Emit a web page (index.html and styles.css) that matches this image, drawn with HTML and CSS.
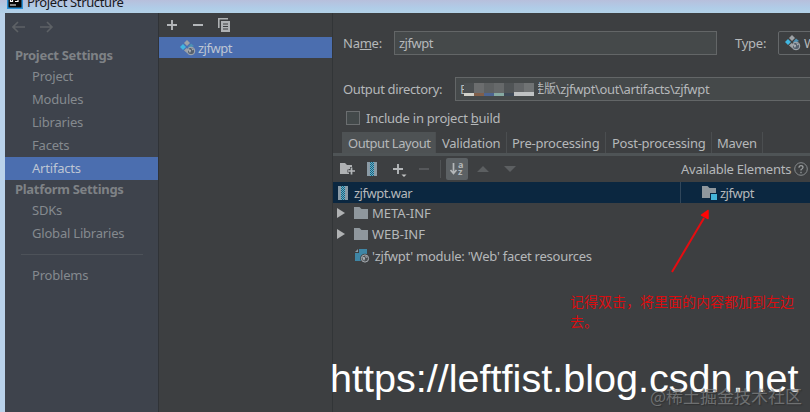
FILE: index.html
```html
<!DOCTYPE html>
<html lang="zh-CN">

<head>
    <meta charset="UTF-8">
    <title>Project Structure</title>
    <link rel="stylesheet" href="styles.css">
</head>

<body>
    <!-- shared icons -->
    <svg class="defs">
        <defs>
            <pattern id="zip" width="2" height="2" patternUnits="userSpaceOnUse">
                <rect width="2" height="2" fill="#2b5b70" />
                <rect width="1" height="1" fill="#55b5d6" />
                <rect x="1" y="1" width="1" height="1" fill="#55b5d6" />
            </pattern>
            <symbol id="artifact" viewBox="0 0 16 16">
                <path d="M7 0l3 3-3 3-3-3z" fill="#9da2a6" />
                <path d="M3 4l3 3-3 3-3-3z" fill="#40b6e0" />
                <path d="M11 3.500l3 2.500-2 1-3 1-1-1z" fill="#4d91b5" />
                <path d="M6.500 8l1.500 2-1 3-3-2.500z" fill="#9da2a6" />
                <circle cx="11" cy="11" r="3.800" fill="#55606d" stroke="#a9aeb3" />
                <path d="M8 9l3 1v1l-1 2-2-3zM11 7.500l3 2-1.500 1z" fill="#a9aeb3" />
            </symbol>
            <symbol id="archive" viewBox="0 0 10 14">
                <path d="M0 0h10v14H0z" fill="#8b9ba6" />
                <path d="M3 0h4v14H3z" fill="url(#zip)" />
            </symbol>
            <symbol id="folder" viewBox="0 0 14 12">
                <path d="M0 0h5.500l2 2H14v10H0z" fill="#8f979d" />
            </symbol>
        </defs>
    </svg>

    <div class="titlebar">
        <svg class="app-icon" width="16" height="12" viewBox="0 0 16 12">
            <path d="M0 0h16v9H0z" fill="#2a91d8" />
            <path d="M1.500 0h13v7.500h-13z" fill="#080808" />
            <path d="M3 5h6M3.500 0v1.500h2V0M8 1.500h3V0" fill="none" stroke="#fff" stroke-width="1.200" />
        </svg>
        <span class="title">Project Structure</span>
    </div>

    <div class="window">
        <nav class="sidebar">
            <svg class="history" width="42" height="12" viewBox="0 0 42 12">
                <path d="M13 6H1M6 1L1 6l5 5M28 6h12M35 1l5 5-5 5" fill="none" stroke="#5d6165" stroke-width="1.600" />
            </svg>
            <h2>Project Settings</h2>
            <a class="item">Project</a>
            <a class="item">Modules</a>
            <a class="item">Libraries</a>
            <a class="item">Facets</a>
            <a class="item selected">Artifacts</a>
            <h2 class="platform">Platform Settings</h2>
            <a class="item">SDKs</a>
            <a class="item">Global Libraries</a>
            <hr>
            <a class="item">Problems</a>
        </nav>

        <div class="list">
            <div class="list-tools">
                <svg width="66" height="14" viewBox="0 0 66 14">
                    <path d="M0 7h10M5 2v10M26 7h10" stroke="#b4b7b9" stroke-width="1.900" />
                    <path d="M51.800 10V.8H61" fill="none" stroke="#aeb1b3" stroke-width="1.600" />
                    <path d="M54 3h9v11h-9z" fill="#aeb1b3" />
                    <path d="M56 6h5M56 8.500h5M56 11h5" stroke="#3c3f41" />
                </svg>
            </div>
            <div class="list-row">
                <svg width="16" height="16"><use href="#artifact" /></svg>
                <span>zjfwpt</span>
            </div>
        </div>

        <main class="editor">
            <div class="field name-field">
                <label>Na<u>m</u>e:</label>
                <div class="input name-input">zjfwpt</div>
                <label class="type-label">Type:</label>
                <div class="select">
                    <svg width="16" height="16"><use href="#artifact" /></svg>
                    <span>Web Application: Exploded</span>
                </div>
            </div>
            <div class="field dir-field">
                <label>Output directory:</label>
                <div class="input dir-input">
                    <span class="cut">E</span>
                    <svg class="mosaic" width="70" height="13" viewBox="0 0 70 13">
                        <path d="M0 0h10v10H0z" fill="#4b4f51" />
                        <path d="M10 0h10v10H10z" fill="#6b6d6e" />
                        <path d="M20 0h10v10H20z" fill="#5e6162" />
                        <path d="M30 0h10v10H30z" fill="#66696a" />
                        <path d="M40 0h10v10H40z" fill="#505456" />
                        <path d="M50 0h20v9H50z" fill="#626567" />
                        <path d="M60 0h10v9H60z" fill="#707374" />
                        <path d="M0 10h10v3H0z" fill="#d0d0c9" />
                        <path d="M10 10h10v3H10z" fill="#815f4a" />
                        <path d="M20 10h10v3H20z" fill="#4d6591" />
                        <path d="M30 10h10v3H30z" fill="#86aaa2" />
                        <path d="M40 10h10v3H40z" fill="#3e4957" />
                        <path d="M50 9h20v4H50z" fill="#bfc2c3" />
                    </svg>
                    <span class="half">佳</span><span class="edition">版</span><span class="path">\zjfwpt\out\artifacts\zjfwpt</span>
                </div>
            </div>
            <div class="field check-field">
                <i class="checkbox"></i>
                <span>Include in project <u>b</u>uild</span>
            </div>

            <div class="tabs">
                <span class="tab t1 active">Output Layout</span>
                <span class="tab t2">Validation</span>
                <span class="tab t3">Pre-processing</span>
                <span class="tab t4">Post-processing</span>
                <span class="tab t5">Maven</span>
            </div>

            <div class="toolbar">
                <svg width="176" height="22" viewBox="0 0 176 22">
                    <path d="M0 5h5l2 2h5v4H9v5H0z" fill="#afb1b3" />
                    <path d="M11.500 9v8M7.500 13h8" stroke="#3c3f41" stroke-width="3" />
                    <path d="M11.500 9.500v7M8 13h7" stroke="#b4b7b9" stroke-width="1.700" />
                    <use href="#archive" x="27" y="4" width="10" height="14" />
                    <path d="M53 11h10M58 6v10" stroke="#b4b7b9" stroke-width="1.900" />
                    <path d="M61.500 16.500h5l-2.500 2.500z" fill="#c3c5c6" />
                    <path d="M79 11h10" stroke="#5d6062" stroke-width="1.600" />
                    <path d="M100.500 2v18" stroke="#505355" />
                    <rect x="106" y="0" width="22" height="22" rx="2" fill="#5c6164" />
                    <path d="M113.500 5v10M110.500 12l3 3.500 3-3.500" fill="none" stroke="#b4b7b9" stroke-width="1.700" />
                    <text x="118" y="9.500" class="sort">a</text>
                    <text x="118" y="17" class="sort">z</text>
                    <path d="M137 14h12l-6-6zM164 8h12l-6 6z" fill="#5c5f61" />
                </svg>
                <span class="available">Available Elements</span>
                <svg width="14" height="14" viewBox="0 0 14 14">
                    <circle cx="7" cy="7" r="6.300" fill="none" stroke="#888c8e" />
                    <path d="M5 5.700Q5 3.700 7 3.700T9 5.500Q9 6.500 7 7.700V8.500M7 9.800v1.400" fill="none" stroke="#9da0a2" stroke-width="1.200" />
                </svg>
            </div>

            <div class="tree">
                <div class="node root">
                    <div class="root-left">
                        <svg width="10" height="14"><use href="#archive" /></svg>
                        <span>zjfwpt.war</span>
                    </div>
                    <div class="root-right">
                        <svg width="16" height="14" viewBox="0 0 16 14">
                            <path d="M0 0h5.500l2 2H14v10H0z" fill="#8f979d" />
                            <path d="M8 7h8v7H8z" fill="#082640" />
                            <path d="M9 8h6v6H9z" fill="#45b4d8" />
                        </svg>
                        <span>zjfwpt</span>
                    </div>
                </div>
                <div class="node dir">
                    <svg class="arrow" width="8" height="10"><path d="M0 0l8 5-8 5z" fill="#b0b2b3" /></svg>
                    <svg width="14" height="12"><use href="#folder" /></svg>
                    <span>META-INF</span>
                </div>
                <div class="node dir">
                    <svg class="arrow" width="8" height="10"><path d="M0 0l8 5-8 5z" fill="#b0b2b3" /></svg>
                    <svg width="14" height="12"><use href="#folder" /></svg>
                    <span>WEB-INF</span>
                </div>
                <div class="node facet">
                    <svg width="15" height="15" viewBox="0 0 15 15">
                        <path d="M4 1h8v12H0V5h4z" fill="#3f86a5" />
                        <path d="M0 4l3-3v3z" fill="#8b9ba6" />
                        <circle cx="10" cy="10.500" r="4.800" fill="#3c3f41" />
                        <circle cx="10" cy="10.500" r="3.600" fill="#4b4f52" stroke="#a9aeb3" />
                        <path d="M7.500 8.500l2.500 1v1.500l-1 2-1.500-3zM10 7.500l2.500 1.500-1.500 1z" fill="#a9aeb3" />
                    </svg>
                    <span>'zjfwpt' module: 'Web' facet resources</span>
                </div>
            </div>
        </main>
    </div>

    <!-- annotations over the window -->
    <svg class="pointer" width="50" height="68" viewBox="0 0 50 68">
        <path d="M2 65L34 11" stroke="#e60c10" stroke-width="2" />
        <path d="M38 3.500v8l-6.500-3.500z" fill="#ff0505" stroke="#ff0505" stroke-width="1.500" stroke-linejoin="round" />
    </svg>
    <p class="note">记得双击，将里面的内容都加到左边去。</p>
    <p class="url">https://leftfist.blog.csdn.net</p>
    <p class="community">@稀土掘金技术社区</p>
</body>

</html>
```
FILE: styles.css
```css
* {
    box-sizing: border-box;
}

body {
    margin: 0;
    width: 810px;
    height: 412px;
    position: relative;
    overflow: hidden;
    display: flex;
    flex-direction: column;
    background: #b9d2ea;
    color: #b5b8ba;
    font: 13px/20px "Noto Sans", "Noto Sans CJK SC", sans-serif;
    letter-spacing: -0.25px;
    white-space: nowrap;
}

svg {
    display: block;
    flex: none;
}

.defs {
    position: absolute;
    width: 0;
    height: 0;
}

.titlebar {
    display: flex;
    height: 13px;
    padding-left: 7px;
    background: linear-gradient(#b7bfdc, #b0cce7 60%, #b3d2e8);
    overflow: hidden;
}

.title {
    margin: -8px 0 0 4px;
    color: #17191c;
    letter-spacing: -0.35px;
}

.window {
    display: flex;
    flex: 1;
    margin-left: 5px;
    background: #3d3f41;
}

/* left navigation */
.sidebar {
    width: 154px;
    background: #3e434c;
    border-right: 1px solid #303337;
    color: #858a8f;
    letter-spacing: -0.2px;
}

.history {
    margin: 8px 0 12px 7px;
}

.sidebar h2 {
    margin: 0;
    padding-left: 10px;
    height: 20px;
    font-size: 13px;
    line-height: 20px;
    letter-spacing: -0.3px;
    color: #7e8286;
}

.sidebar .platform {
    line-height: 18px;
}

.item {
    display: block;
    height: 23px;
    padding-left: 27px;
    line-height: 23px;
}

.item.selected {
    background: #4b6eaf;
    color: #bdc5d3;
}

.platform ~ .item {
    line-height: 21px;
}

.sidebar hr {
    margin: 8px 15px 10px 16px;
    border: 0;
    border-top: 1px solid #4d5259;
}

/* artifacts list */
.list {
    width: 174px;
    border-right: 1px solid #323537;
}

.list-tools {
    height: 24px;
    padding: 5px 0 0 8px;
}

.list-row {
    display: flex;
    align-items: center;
    gap: 2px;
    height: 21px;
    padding-left: 21px;
    background: #4b6eaf;
    color: #bdc5d3;
    letter-spacing: -0.5px;
}

/* artifact editor */
.editor {
    flex: 1;
    min-width: 0;
    overflow: hidden;
}

.field {
    display: flex;
    align-items: center;
    padding-left: 10px;
}

.field label {
    flex: none;
}

.name-field {
    height: 24px;
    margin-top: 18px;
}

.name-field label:first-child {
    width: 51px;
}

.input {
    display: flex;
    align-items: center;
    height: 24px;
    padding-left: 4px;
    background: #45494a;
    border: 1px solid #636667;
}

.name-input {
    flex: none;
    width: 323px;
    letter-spacing: -0.5px;
}

.name-field .type-label {
    width: 43px;
    margin-left: 18px;
}

.select {
    display: flex;
    flex: none;
    align-items: center;
    gap: 3px;
    width: 200px;
    height: 24px;
    padding-left: 6px;
    border: 1px solid #65686a;
    border-radius: 2px 0 0 2px;
}

.dir-field {
    height: 24px;
    margin-top: 22px;
}

.dir-field label {
    width: 112px;
    letter-spacing: -0.35px;
}

.dir-input {
    flex: 1;
    border-right: 0;
}

.cut {
    width: 4px;
    overflow: hidden;
}

.half {
    display: flex;
    justify-content: flex-end;
    width: 6px;
    margin-left: 4px;
    font-size: 12px;
    overflow: hidden;
}

.edition {
    font-size: 12px;
}

.path {
    letter-spacing: -0.35px;
}

.check-field {
    height: 14px;
    margin-top: 10px;
    padding-left: 13px;
    gap: 6px;
}

.checkbox {
    width: 14px;
    height: 14px;
    background: #43494a;
    border: 1px solid #6b6e70;
}

.tabs {
    display: flex;
    height: 24px;
    margin-top: 7px;
    padding-left: 9px;
    border-bottom: 3px solid #4f5456;
}

.tab {
    height: 21px;
    line-height: 23px;
    padding-left: 6px;
    border-right: 1px solid #4b4e50;
}

.tab.active {
    background: #4e5254;
}

.t1 {
    width: 94px;
    letter-spacing: -0.45px;
}

.t2 {
    width: 71px;
}

.t3 {
    width: 99px;
    padding-left: 5px;
}

.t4 {
    width: 106px;
}

.t5 {
    width: 51px;
    padding-left: 5px;
}

.toolbar {
    display: flex;
    align-items: center;
    height: 26px;
    padding-left: 7px;
}

.sort {
    font: bold 9px "Open Sans", sans-serif;
    fill: #b4b7b9;
}

.available {
    width: 113px;
    margin-left: 165px;
}

.node {
    display: flex;
    align-items: center;
    height: 21px;
}

.root {
    background: #0b2740;
}

.root-left,
.root-right {
    display: flex;
    align-items: center;
    height: 21px;
}

.root-left {
    width: 348px;
    padding-left: 5px;
    gap: 6px;
    border-right: 1px solid #30465a;
    letter-spacing: -0.5px;
}

.root-right {
    padding-left: 21px;
    gap: 2px;
    letter-spacing: -0.5px;
}

.dir {
    padding: 0 0 2px 4px;
    gap: 4px;
    letter-spacing: 0;
}

.arrow {
    margin-right: 5px;
}

.facet {
    padding-left: 22px;
    gap: 2px;
}

/* annotations */
.pointer {
    position: absolute;
    left: 670px;
    top: 207px;
}

.note {
    position: absolute;
    left: 570px;
    top: 291px;
    width: 228px;
    margin: 0;
    color: #d90d10;
    font: 14px/20px "Noto Sans CJK SC", sans-serif;
    letter-spacing: 0;
    white-space: normal;
}

.url {
    position: absolute;
    left: 330px;
    top: 357px;
    margin: 0;
    color: #fff;
    font: 39.6px/42px "Liberation Sans", Arial, sans-serif;
    letter-spacing: 0;
}

.community {
    position: absolute;
    left: 650px;
    top: 386px;
    margin: 0;
    color: #8b8d8eaa;
    font: 17px/20px "Noto Sans CJK SC", sans-serif;
    letter-spacing: 0;
    text-shadow: 1px 1px 1px #2227;
}
```
